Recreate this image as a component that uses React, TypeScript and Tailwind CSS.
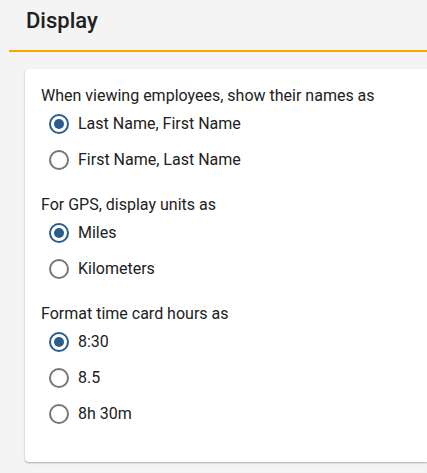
import React, { useState } from "react";

const groups = [
  {
    label: "When viewing employees, show their names as",
    options: ["Last Name, First Name", "First Name, Last Name"],
  },
  {
    label: "For GPS, display units as",
    options: ["Miles", "Kilometers"],
  },
  {
    label: "Format time card hours as",
    options: ["8:30", "8.5", "8h 30m"],
  },
];

function Radio({ checked }: { checked: boolean }) {
  return (
    <span
      className={`flex h-5 w-5 shrink-0 items-center justify-center rounded-full border-2 ${
        checked ? "border-[#2a5d8e]" : "border-[#767676]"
      }`}
    >
      {checked && <span className="h-2.5 w-2.5 rounded-full bg-[#2a5d8e]" />}
    </span>
  );
}

export default function App() {
  const [values, setValues] = useState<number[]>([0, 0, 0]);

  return (
    <div
      className="min-h-[473px] w-full overflow-hidden bg-[#f4f4f4] text-[#212121]"
      style={{ fontFamily: "Roboto, 'Liberation Sans', sans-serif" }}
    >
      <div className="ml-[9px] border-b-2 border-[#f5a800] pl-[17px] pb-[14px] pt-[6px]">
        <h2 className="text-[22px] font-medium leading-[30px]">Display</h2>
      </div>
      <div className="ml-[25px] mt-[17px] rounded-l-[4px] bg-white pl-4 pt-[17px] pb-[13px] shadow-[0_1px_2px_rgba(0,0,0,0.3)]">
        {groups.map((group, gi) => (
          <div key={gi} className="mb-[17px]">
            <p className="text-[16px] leading-5">{group.label}</p>
            <div className="flex flex-col">
              {group.options.map((opt, oi) => (
                <label
                  key={oi}
                  className="flex h-[36px] cursor-pointer items-center gap-[9px] pl-2 text-[16px]"
                  onClick={() =>
                    setValues((v) => v.map((x, i) => (i === gi ? oi : x)))
                  }
                >
                  <Radio checked={values[gi] === oi} />
                  <span>{opt}</span>
                </label>
              ))}
            </div>
          </div>
        ))}
      </div>
    </div>
  );
}
